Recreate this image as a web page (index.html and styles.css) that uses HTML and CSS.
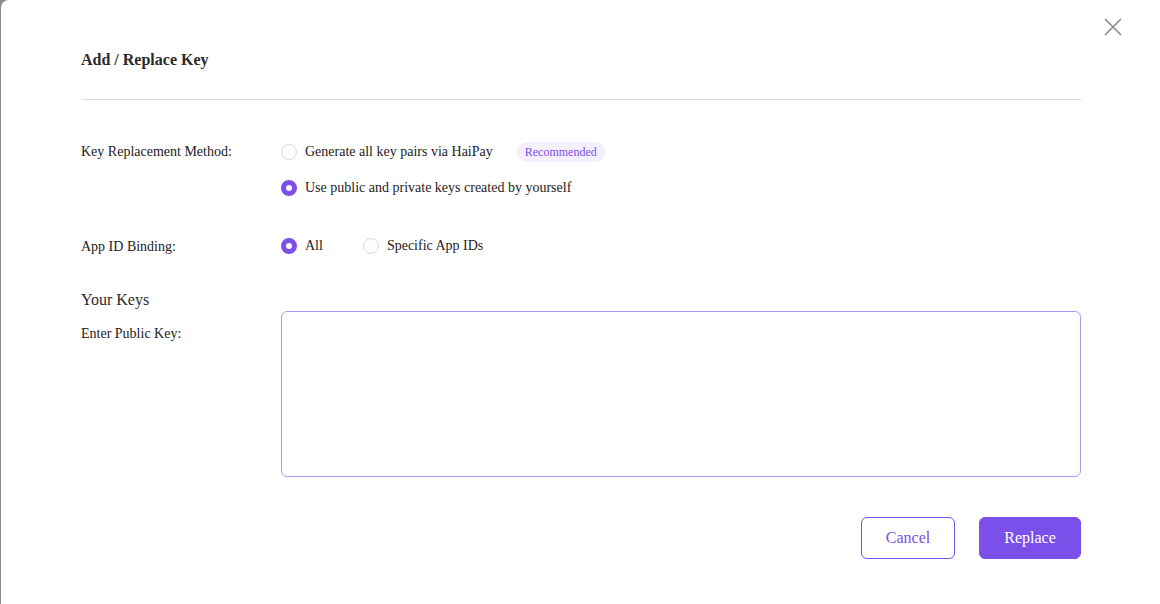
FILE: index.html
```html
<!DOCTYPE html>
<html>
<head>
<meta charset="utf-8">
<link rel="stylesheet" href="styles.css">
</head>
<body>
<div class="modal">
  <button class="close" aria-label="Close">
    <svg width="18" height="18" viewBox="0 0 18 18"><path d="M1 1 L17 17 M17 1 L1 17" stroke="#8a8a8a" stroke-width="1.6" fill="none"/></svg>
  </button>
  <div class="header"><h2 class="title">Add / Replace Key</h2></div>
  <div class="form">
    <div class="row row-method">
      <div class="label">Key Replacement Method:</div>
      <div class="options vertical">
        <label class="opt"><span class="radio"></span><span>Generate all key pairs via HaiPay</span><span class="badge">Recommended</span></label>
        <label class="opt"><span class="radio checked"></span><span>Use public and private keys created by yourself</span></label>
      </div>
    </div>
    <div class="row row-app">
      <div class="label">App ID Binding:</div>
      <div class="options horizontal">
        <label class="opt"><span class="radio checked"></span><span>All</span></label>
        <label class="opt"><span class="radio"></span><span>Specific App IDs</span></label>
      </div>
    </div>
    <div class="section">Your Keys</div>
    <div class="row row-key">
      <div class="label label-key">Enter Public Key:</div>
      <textarea class="keybox"></textarea>
    </div>
    <div class="actions">
      <button class="btn btn-cancel">Cancel</button>
      <button class="btn btn-primary">Replace</button>
    </div>
  </div>
</div>
</body>
</html>
```

FILE: styles.css
```css
html, body {
  margin: 0;
  padding: 0;
  height: 100%;
  overflow: hidden;
}
body {
  background: #8c8c8c;
  font-family: "Liberation Serif", "Times New Roman", serif;
  color: #222;
}
.modal {
  position: relative;
  margin-left: 1px;
  width: 1170px;
  height: 620px;
  background: #fff;
  border-radius: 8px;
  padding-left: 80px;
  box-sizing: border-box;
}
.close {
  position: absolute;
  left: 1103px;
  top: 18px;
  width: 18px;
  height: 18px;
  padding: 0;
  border: 0;
  background: none;
  cursor: pointer;
}
.close svg { display: block; }
.header {
  width: 1000px;
  height: 100px;
  border-bottom: 1px solid #dcdcdc;
  box-sizing: border-box;
}
.title {
  margin: 0;
  padding-top: 50px;
  font-size: 16px;
  line-height: 20px;
  font-weight: bold;
  color: #2b2b2b;
}
.form {
  width: 1000px;
  font-size: 14px;
  line-height: 20px;
}
.row {
  display: flex;
}
.label {
  width: 200px;
  flex: none;
  color: #222;
}
.row-method { margin-top: 42px; }
.row-app { margin-top: 37px; }
.row-app .label { padding-top: 2px; }
.options.vertical {
  display: flex;
  flex-direction: column;
  gap: 16px;
}
.options.horizontal {
  display: flex;
  gap: 40px;
}
.opt {
  display: flex;
  align-items: center;
  gap: 8px;
  color: #222;
}
.radio {
  width: 16px;
  height: 16px;
  box-sizing: border-box;
  border: 1px solid #d9d9d9;
  border-radius: 50%;
  background: #fff;
  flex: none;
}
.radio.checked {
  border: 5px solid #7b4fe9;
  background: #fff;
}
.badge {
  margin-left: 16px;
  padding: 0 8px;
  height: 20px;
  line-height: 20px;
  border-radius: 10px;
  background: #f4f0fe;
  color: #7b4fe9;
  font-size: 12px;
}
.section {
  margin-top: 33px;
  font-size: 16px;
  line-height: 20px;
  color: #2b2b2b;
}
.row-key { margin-top: 1px; }
.label-key { padding-top: 13px; }
.keybox {
  width: 800px;
  height: 166px;
  box-sizing: border-box;
  border: 1px solid #b197f2;
  border-radius: 6px;
  resize: none;
  outline: none;
  font-family: inherit;
  font-size: 14px;
  padding: 8px 12px;
  margin: 0;
  display: block;
}
.actions {
  margin-top: 40px;
  display: flex;
  justify-content: flex-end;
  gap: 24px;
}
.btn {
  height: 42px;
  border-radius: 6px;
  font-family: "Liberation Serif", "Times New Roman", serif;
  font-size: 16px;
  cursor: pointer;
  box-sizing: border-box;
}
.btn-cancel {
  width: 94px;
  background: #fff;
  border: 1px solid #7b4fe9;
  color: #7b4fe9;
}
.btn-primary {
  width: 102px;
  background: #7b4fe9;
  border: 1px solid #7b4fe9;
  color: #fff;
}
```
